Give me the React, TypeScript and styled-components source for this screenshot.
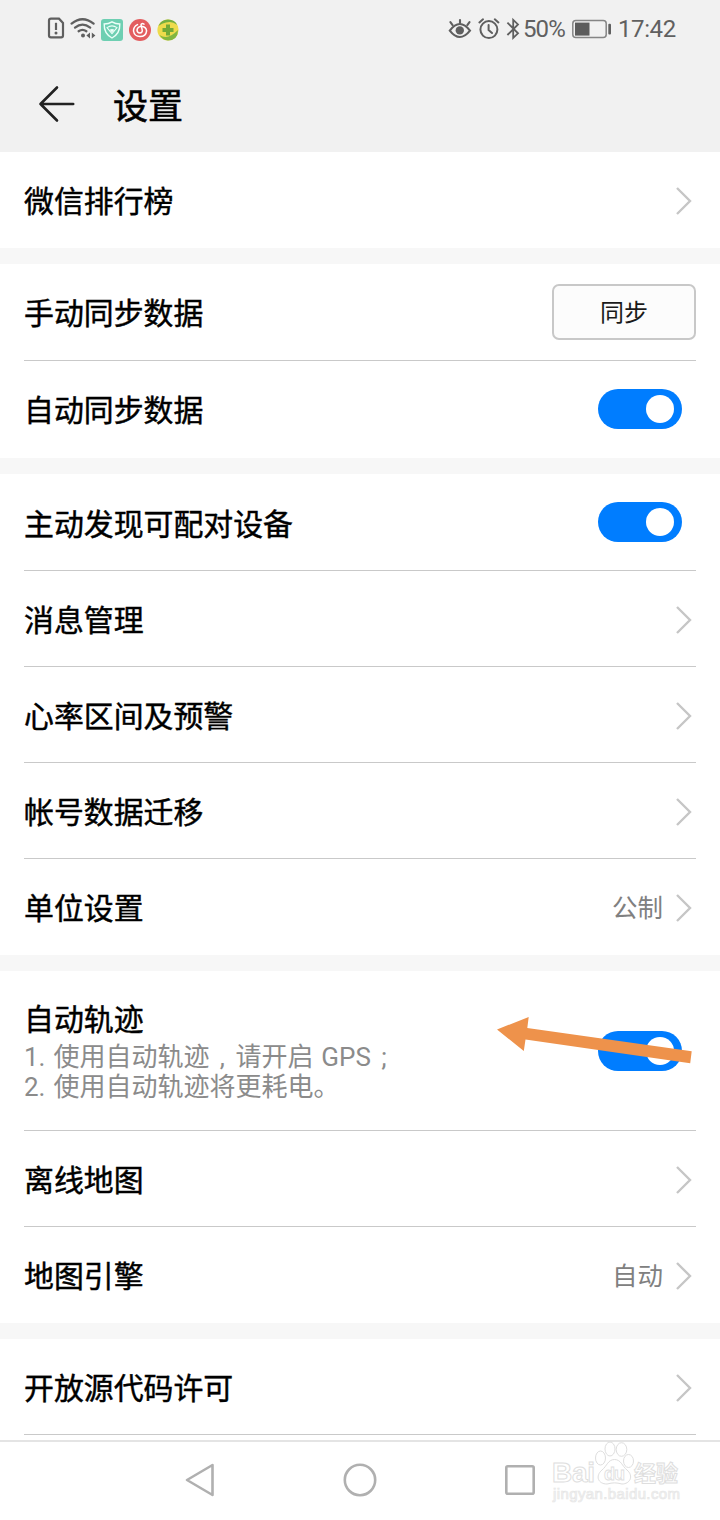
import React from 'react';
import styled, { createGlobalStyle } from 'styled-components';

const GlobalStyle = createGlobalStyle`
  * { box-sizing: border-box; }
  body {
    margin: 0;
    background: #fff;
    font-family: Roboto, "Noto Sans CJK SC", sans-serif;
    color: #000;
  }
`;

const Screen = styled.div`
  width: 720px;
  height: 1520px;
  display: flex;
  flex-direction: column;
  position: relative;
  overflow: hidden;
  background: #fff;
`;

const Top = styled.header`
  height: 152px;
  flex: none;
  background: #f1f1f1;
`;

const StatusBar = styled.div`
  height: 58px;
  display: flex;
  align-items: center;
  justify-content: space-between;
  padding: 0 44px 0 46px;
`;

const StatusGroup = styled.div`
  display: flex;
  align-items: center;
  color: #5f5f5f;
  svg { display: block; flex: none; }
`;

const StatusText = styled.span<{ $width: number; $tracking?: number }>`
  width: ${(p) => p.$width}px;
  font-size: 24px;
  line-height: 28px;
  letter-spacing: ${(p) => p.$tracking ?? -0.4}px;
  white-space: nowrap;
  color: #606060;
`;

const TitleBar = styled.div`
  height: 94px;
  display: flex;
  align-items: center;
  padding: 0 0 2px 36px;
  gap: 35px;
  svg { display: block; }
`;

const Title = styled.h1`
  margin: 0;
  padding-top: 8px;
  font-size: 35px;
  line-height: 48px;
  font-weight: 400;
  -webkit-text-stroke: 0.6px #000;
`;

const List = styled.main`
  height: 1288px;
  flex: none;
  overflow: hidden;
  background: #f7f7f7;
  display: flex;
  flex-direction: column;
  gap: 16px;
`;

const Group = styled.section`
  background: #fff;
  padding: 0 24px;
  flex: none;
`;

const Row = styled.div<{ $height?: number; $line?: boolean; $inset?: number }>`
  height: ${(p) => p.$height ?? 96}px;
  display: flex;
  align-items: center;
  justify-content: space-between;
  padding-right: ${(p) => p.$inset ?? 0}px;
  padding-bottom: ${(p) => (p.$line ? 0 : 1)}px;
  border-bottom: ${(p) => (p.$line ? '1px solid #c9c9c9' : 'none')};
`;

const Label = styled.div<{ $drop?: number }>`
  padding-top: ${(p) => p.$drop ?? 4}px;
  font-size: 29.9px;
  line-height: 40px;
  font-weight: 400;
  -webkit-text-stroke: 0.45px #000;
`;

const Copy = styled.div`
  padding-bottom: 4px;
`;

const Notes = styled.div`
  margin-top: 2px;
  font-size: 26px;
  line-height: 30px;
  word-spacing: 1.5px;
  color: #8b8b8b;
`;

const Punct = styled.span`
  display: inline-block;
  width: 26px;
  text-align: center;
`;

const Trailing = styled.div`
  display: flex;
  align-items: center;
  gap: 12px;
  padding: 2px 3px 0 0;
  svg { display: block; }
`;

const Value = styled.span`
  font-size: 25.5px;
  line-height: 36px;
  color: #808080;
`;

const SyncButton = styled.button`
  width: 144px;
  height: 56px;
  padding: 1px 0 0;
  border: 2px solid #c8c8c8;
  border-radius: 7px;
  background: #fcfcfc;
  font: 24px/34px Roboto, "Noto Sans CJK SC", sans-serif;
  color: #1a1a1a;
`;

const Switch = styled.div`
  width: 84px;
  height: 40px;
  padding: 0 8px;
  border-radius: 20px;
  background: #007dff;
  display: flex;
  align-items: center;
  justify-content: flex-end;
`;

const Knob = styled.div`
  width: 28px;
  height: 28px;
  border-radius: 50%;
  background: #fff;
`;

const NavBar = styled.nav`
  height: 80px;
  flex: none;
  border-top: 2px solid #e4e4e4;
  background: #fff;
  display: flex;
  align-items: center;
  justify-content: center;
  gap: 124px;
  padding-bottom: 2px;
  svg { display: block; }
`;

const Pointer = styled.svg`
  position: absolute;
  left: 490px;
  top: 1010px;
`;

const Watermark = styled.svg`
  position: absolute;
  left: 548px;
  top: 1438px;
`;

const Chevron = () => (
  <svg width="18" height="30" viewBox="0 0 18 30" fill="none" stroke="#c6c6c6" strokeWidth="2.4">
    <path d="M2 2 L15 15 L2 28" />
  </svg>
);

const Toggle = () => (
  <Switch role="switch" aria-checked="true">
    <Knob />
  </Switch>
);

const LinkRow = ({ label, value, line }: { label: string; value?: string; line?: boolean }) => (
  <Row $line={line}>
    <Label>{label}</Label>
    <Trailing>
      {value && <Value>{value}</Value>}
      <Chevron />
    </Trailing>
  </Row>
);

const LeftStatusIcons = () => (
  <StatusGroup>
    <svg width="24" height="28" viewBox="46 14 24 28" fill="none" stroke="currentColor" strokeWidth="2.2">
      <path d="M51 17.7 H59 L63 22 V34.5 Q63 36.3 61.2 36.3 H51 Q49 36.3 49 34.5 V19.5 Q49 17.7 51 17.7 Z" />
      <path d="M56 21.8 V29" />
      <circle cx="56" cy="32.1" r="1.5" fill="currentColor" stroke="none" />
    </svg>
    <svg width="31" height="28" viewBox="70 14 31 28" fill="none" stroke="currentColor" strokeWidth="2.3" strokeLinecap="round">
      <path d="M71.6 22.6 Q82.5 13.8 93.6 22.6" />
      <path d="M75 26.6 Q82.5 20.6 90.2 26.6" />
      <path d="M78.6 30.2 Q82.5 27.4 86.4 30.2" />
      <circle cx="83" cy="34.6" r="2" fill="currentColor" stroke="none" />
      <path d="M90 31.5 V37.5 L86.4 34.5 Z M91.8 31.5 V37.5 L95.4 34.5 Z" fill="currentColor" stroke="none" />
    </svg>
    <svg width="28" height="28" viewBox="101 14 28 28" fill="none">
      <rect x="101" y="18" width="22" height="22" rx="3" fill="#6ecfb2" />
      <path d="M112 20.8 Q115.5 23 119.8 23 Q120.2 32.5 112 37 Q103.8 32.5 104.2 23 Q108.5 23 112 20.8 Z" stroke="#edfff9" strokeWidth="1.4" />
      <path d="M107 26.6 Q112 23.2 117 26.6 L112 32.6 Z" stroke="#edfff9" strokeWidth="1.1" />
      <path d="M109.6 28.8 Q112 27.4 114.4 28.8 L112 31.6 Z" fill="#edfff9" />
    </svg>
    <svg width="28" height="28" viewBox="129 14 28 28" fill="none">
      <circle cx="140" cy="29" r="11" fill="#e35d5f" />
      <path d="M137.5 23.6 Q133.4 25.6 133.5 30 Q134.4 35.4 140 35.6 Q146 35.4 146.6 29.8 Q146 25.6 141.6 25.2 Q137.4 25.6 137 29.2 Q137.3 32 139.8 32.1 Q142.8 31.6 142.2 28.8 L141 23.8 Q141.4 21.8 144 23.2" stroke="#fff" strokeWidth="1.5" strokeLinecap="round" />
    </svg>
    <svg width="24" height="28" viewBox="157 14 24 28">
      <circle cx="168" cy="29" r="10.6" fill="#eedb4c" />
      <path d="M158.4 25 Q161 18.4 168 18.4 Q175 18.6 177.3 24 Q172 19.6 166 21.6 Q162 22.6 158.4 25 Z" fill="#74af42" />
      <path d="M159.5 34 Q168 39.5 178 29 Q177.8 39.3 168 39.6 Q162.5 39.2 159.5 34 Z" fill="#82b640" />
      <path d="M166 23.5 h4 v3.5 h3.5 v4 h-3.5 v3.5 h-4 v-3.5 h-3.5 v-4 h3.5 Z" fill="#72a936" />
    </svg>
  </StatusGroup>
);

const RightStatusIcons = () => (
  <StatusGroup>
    <svg width="30" height="28" viewBox="448 14 30 28" fill="none" stroke="currentColor" strokeWidth="2.1" strokeLinecap="round">
      <path d="M449.8 29.6 Q459.7 16.4 470 29.6 Q459.7 42.4 449.8 29.6 Z" />
      <circle cx="459.8" cy="29.4" r="4.2" fill="currentColor" stroke="none" />
      <path d="M460 19 V22 M450.4 21.2 L452.6 24.1 M469.5 21.2 L467.3 24.1" />
    </svg>
    <svg width="28" height="28" viewBox="478 14 28 28" fill="none" stroke="currentColor" strokeWidth="2" strokeLinecap="round">
      <circle cx="488.9" cy="28.6" r="8.5" />
      <path d="M488.6 24.1 V29 L492 32 M479.4 21.4 L483 18.3 M498.4 21.4 L494.8 18.3" />
    </svg>
    <svg width="17" height="28" viewBox="506 14 17 28" fill="none" stroke="currentColor" strokeWidth="1.8">
      <path d="M507.4 21.7 L518 32.3 L513.2 36.8 V18.9 L518 23.4 L507.4 34" />
    </svg>
    <StatusText $width={48} $tracking={-0.9}>50%</StatusText>
    <svg width="47" height="28" viewBox="571 14 47 28" fill="none">
      <rect x="572.8" y="19.6" width="33.4" height="17" rx="3" stroke="#858585" strokeWidth="1.5" />
      <rect x="575" y="21.6" width="14.5" height="13" fill="#5c5c5c" />
      <rect x="608.3" y="22.8" width="2.7" height="10.8" rx="1" fill="#606060" />
    </svg>
    <StatusText $width={58}>17:42</StatusText>
  </StatusGroup>
);

export default function App() {
  return (
    <>
      <GlobalStyle />
      <Screen>
        <Top>
          <StatusBar>
            <LeftStatusIcons />
            <RightStatusIcons />
          </StatusBar>
          <TitleBar>
            <svg width="42" height="42" viewBox="36 83 42 42" fill="none" stroke="#222" strokeWidth="2.6" strokeLinecap="round" strokeLinejoin="round">
              <path d="M73.2 104 H40.5 M57 87.5 L40.5 104 L57 120.5" />
            </svg>
            <Title>设置</Title>
          </TitleBar>
        </Top>
        <List>
          <Group>
            <LinkRow label="微信排行榜" />
          </Group>
          <Group>
            <Row $line $height={97}>
              <Label>手动同步数据</Label>
              <SyncButton>同步</SyncButton>
            </Row>
            <Row $inset={14} $height={97}>
              <Label>自动同步数据</Label>
              <Toggle />
            </Row>
          </Group>
          <Group>
            <Row $line $inset={14} $height={97}>
              <Label $drop={6}>主动发现可配对设备</Label>
              <Toggle />
            </Row>
            <LinkRow label="消息管理" line />
            <LinkRow label="心率区间及预警" line />
            <LinkRow label="帐号数据迁移" line />
            <LinkRow label="单位设置" value="公制" />
          </Group>
          <Group>
            <Row $line $inset={14} $height={160}>
              <Copy>
                <Label>自动轨迹</Label>
                <Notes>
                  <div>1. 使用自动轨迹<Punct>,</Punct>请开启 GPS<Punct>;</Punct></div>
                  <div>2. 使用自动轨迹将更耗电。</div>
                </Notes>
              </Copy>
              <Toggle />
            </Row>
            <LinkRow label="离线地图" line />
            <LinkRow label="地图引擎" value="自动" />
          </Group>
          <Group>
            <LinkRow label="开放源代码许可" line />
            <Row />
          </Group>
        </List>
        <NavBar>
          <svg width="36" height="36" viewBox="182 1462 36 36" fill="none" stroke="#b0b0b0" strokeWidth="2.6" strokeLinejoin="round">
            <path d="M212.5 1465 V1495 L187 1480 Z" />
          </svg>
          <svg width="36" height="36" viewBox="0 0 36 36" fill="none" stroke="#b0b0b0" strokeWidth="2.6">
            <circle cx="18" cy="18" r="15.2" />
          </svg>
          <svg width="36" height="36" viewBox="0 0 36 36" fill="none" stroke="#b0b0b0" strokeWidth="2.6">
            <rect x="4.3" y="4.3" width="27.4" height="27.4" rx="1.5" />
          </svg>
        </NavBar>
        <Pointer width="210" height="60" viewBox="490 1010 210 60">
          <path d="M497 1029.5 L528.7 1017 L527.3 1028 L691.7 1051.3 L690.2 1063.3 L525.5 1039.5 L523.8 1051 Z" fill="#ee924b" />
        </Pointer>
        <Watermark width="140" height="70" viewBox="548 1438 140 70" fill="#fff" stroke="#dedede" strokeWidth="1">
          <text x="552" y="1482" fontFamily="Liberation Sans, sans-serif" fontWeight="700" fontSize="28" textLength="43">Bai</text>
          <ellipse cx="600.5" cy="1458" rx="5" ry="7" />
          <ellipse cx="610" cy="1449" rx="5" ry="7" />
          <ellipse cx="621.5" cy="1449.5" rx="5.3" ry="6.8" />
          <ellipse cx="628.5" cy="1461" rx="5" ry="6.5" />
          <path d="M614.5 1459.5 C621 1459.5 622 1466 627 1470 C634 1476 630 1484 622 1484 C616 1482.5 613 1482.5 607 1484 C598 1484 595 1476 602 1470 C607 1466 608 1459.5 614.5 1459.5 Z" />
          <text x="604" y="1480" fontFamily="Liberation Sans, sans-serif" fontWeight="700" fontSize="18" strokeWidth="0.8" textLength="21">du</text>
          <text x="634" y="1481" fontFamily="Noto Sans CJK SC, sans-serif" fontWeight="700" fontSize="22" textLength="44">经验</text>
          <text x="553" y="1499" fontFamily="Liberation Sans, sans-serif" fontSize="15" fill="#f6f6f6" stroke="#e6e6e6" strokeWidth="0.7" textLength="127">jingyan.baidu.com</text>
        </Watermark>
      </Screen>
    </>
  );
}
